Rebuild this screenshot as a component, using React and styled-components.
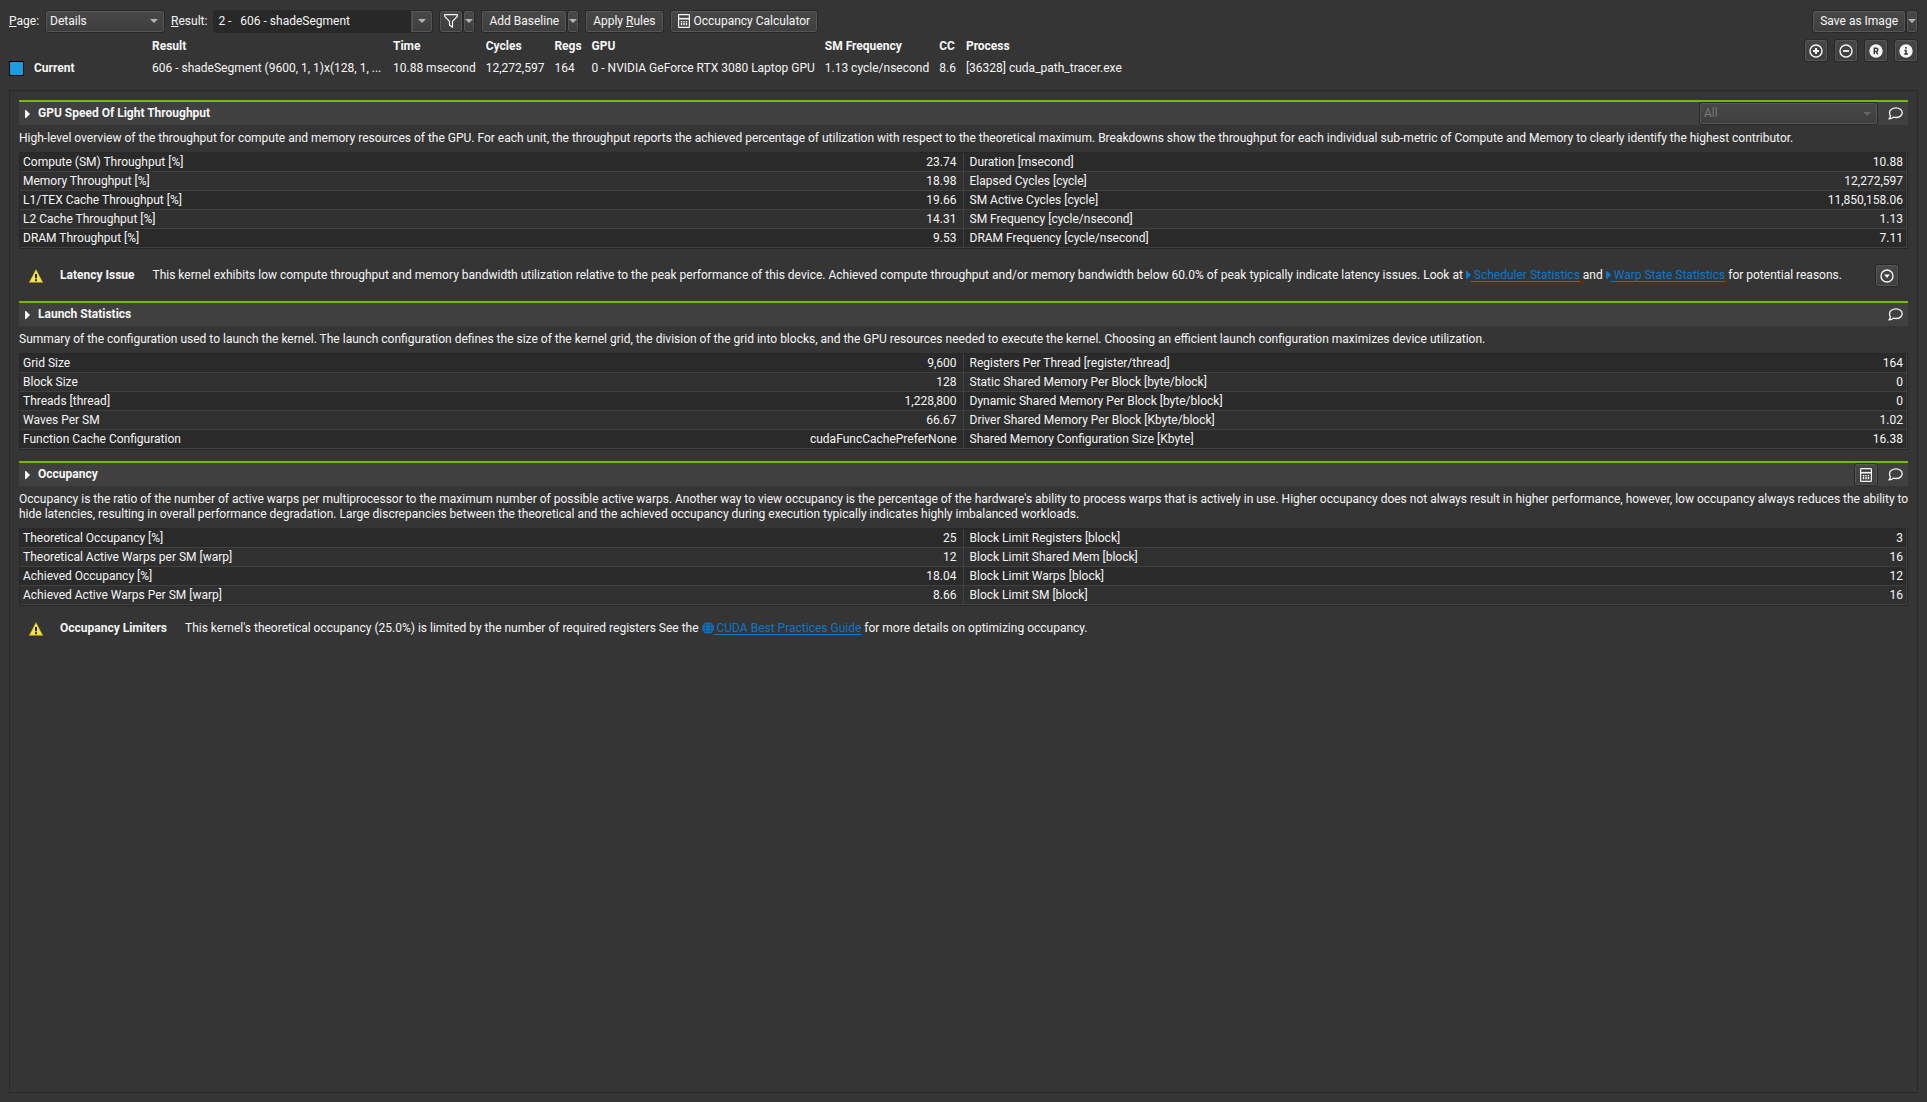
import React, { useId } from "react";
import styled, { createGlobalStyle, css } from "styled-components";

const GlobalStyle = createGlobalStyle`
  *, *::before, *::after { box-sizing: border-box; }
  body {
    margin: 0;
    background: #353535;
    color: #f5f5f5;
    font: 12px/15px Roboto, "Liberation Sans", sans-serif;
  }
  button, select { font: inherit; color: inherit; }
  svg { display: block; flex: none; }
`;

const Page = styled.div`
  display: flex;
  flex-direction: column;
  min-height: 100vh;
  padding: 9px;
`;

const Toolbar = styled.div`
  display: flex;
  align-items: center;
  gap: 6px;
  height: 24px;
`;

const ToolGroup = styled.div`
  display: flex;
  align-items: center;
`;

const Spacer = styled.div`
  flex: 1;
`;

const raised = css`
  border: 1px solid #282828;
  border-radius: 3px;
  background: linear-gradient(#484848, #3e3e3e);
  box-shadow: inset 0 0 0 1px #565656;
`;

const Button = styled.button`
  ${raised}
  display: inline-flex;
  align-items: center;
  justify-content: center;
  gap: 4px;
  height: 23px;
  padding: ${(p) => (p.$narrow || p.$icon ? "0" : "0 7px")};
  width: ${(p) => (p.$narrow ? "12px" : p.$icon ? "24px" : "auto")};
  color: ${(p) => (p.$narrow ? "#b4b4b4" : "inherit")};
  white-space: nowrap;
`;

const FlatButton = styled.button`
  display: inline-flex;
  align-items: center;
  justify-content: center;
  width: 22px;
  height: 22px;
  padding: 0;
  border: 0;
  background: none;
`;

const FieldLabel = styled.label`
  margin-right: 6px;
`;

const SelectBox = styled.div`
  display: inline-grid;
  width: ${(p) => p.$width}px;
  height: 23px;
  color: ${(p) => (p.$disabled ? "#777" : "inherit")};
  > * { grid-area: 1 / 1; }
`;

const Select = styled.select`
  ${raised}
  ${(p) => p.$sunken && css`background: #282828; box-shadow: none;`}
  appearance: none;
  width: 100%;
  padding: 0 20px 0 4px;
  opacity: 1;
  color: inherit;
`;

const SelectArrow = styled.span`
  display: flex;
  align-items: center;
  justify-content: center;
  justify-self: end;
  width: 22px;
  color: ${(p) => (p.$dim ? "#666" : "#b4b4b4")};
  pointer-events: none;
  ${(p) => p.$boxed && css`${raised} border-left-color: #484848; border-radius: 0 3px 3px 0;`}
`;

const Summary = styled.div`
  display: flex;
  justify-content: space-between;
  align-items: flex-start;
  height: 57px;
`;

const SummaryTable = styled.table`
  border-collapse: collapse;
  margin-top: 2px;
  th, td {
    height: 22px;
    padding: 0 10px 0 0;
    text-align: left;
    white-space: nowrap;
  }
`;

const ResultCell = styled.th`
  min-width: 241px;
`;

const CurrentLabel = styled.span`
  display: flex;
  align-items: center;
  gap: 10px;
  width: 133px;
`;

const Swatch = styled.span`
  width: 15px;
  height: 15px;
  border: 1px solid #000;
  background: #1c9ce0;
`;

const SummaryActions = styled.div`
  display: flex;
  gap: 6px;
  padding-top: 6px;
`;

const Panel = styled.main`
  flex: 1;
  display: flex;
  flex-direction: column;
  gap: 11px;
  padding: 9px;
  border: 1px solid #282828;
`;

const SectionHeader = styled.header`
  display: flex;
  align-items: center;
  gap: 6px;
  height: 25px;
  padding-right: 2px;
  border-top: 2px solid #76b900;
  background: #404040;
`;

const SectionTitle = styled.h2`
  flex: 1;
  margin: 0;
  font-size: 12px;
  font-weight: 700;
`;

const Toggle = styled.button`
  display: flex;
  align-items: center;
  gap: 8px;
  padding: 0 6px;
  border: 0;
  background: none;
`;

const Description = styled.p`
  margin: 0 -6px 0 0;
  padding: 6px 0;
`;

const Metrics = styled.table`
  width: 100%;
  table-layout: fixed;
  border: 1px solid #282828;
  border-spacing: 0;
  tr { background: #303030; }
  tr:nth-child(odd) { background: #2a2a2a; }
  th, td {
    height: 19px;
    padding: 0 6px;
    border-bottom: 1px solid #404040;
    font-weight: 400;
    white-space: nowrap;
  }
  th { text-align: left; }
  td {
    text-align: right;
    border-right: 1px solid #404040;
  }
  th:first-child { padding-left: 3px; }
  td:last-child { padding-right: 3px; }
`;

const Rule = styled.div`
  display: flex;
  align-items: center;
  padding: 15px 9px 3px 10px;
`;

const RuleName = styled.strong`
  margin: 0 18px 0 17px;
`;

const RuleText = styled.p`
  flex: 1;
  margin: 0;
`;

const Link = styled.a`
  color: #0a78cc;
  text-decoration: underline;
  text-underline-offset: 2px;
  svg { display: inline-block; vertical-align: ${(p) => (p.$globe ? "-2px" : "0")}; }
`;

const Caret = () => (
  <svg width="8" height="4" viewBox="0 0 8 4" fill="currentColor"><path d="M0 0h8L4 4z" /></svg>
);

const Disclosure = () => (
  <svg width="5" height="8" viewBox="0 0 5 8" fill="currentColor"><path d="M0 0h1l4 4-4 4H0z" /></svg>
);

const FilterIcon = () => (
  <svg width="14" height="14" viewBox="0 0 14 14" fill="none" stroke="currentColor" strokeWidth="1.2" strokeLinejoin="round">
    <path d="M.7.7h12.6v1.6L8.500 7.400v5.900L5.500 11V7.400L.7 2.300z" />
  </svg>
);

const CalculatorIcon = () => (
  <svg width="12" height="14" viewBox="0 0 12 14" fill="none" stroke="currentColor">
    <rect x=".6" y=".6" width="10.8" height="12.8" rx=".6" strokeWidth="1.2" />
    <path d="M1 4.700h10" strokeWidth="1.6" />
    <path d="M3.500 7v1.500m2.500-1.500v1.500m2.500-1.500v1.500M3.500 9v2.300m2.500-2.300v2.300m2.500-2.300v2.300" strokeWidth="1.4" />
  </svg>
);

const CircleIcon = ({ kind }) => (
  <svg width="14" height="14" viewBox="0 0 14 14" fill="none" stroke="currentColor">
    <circle cx="7" cy="7" r="6" strokeWidth="1.4" fill={kind === "reset" || kind === "info" ? "currentColor" : "none"} />
    {kind === "plus" && <path d="M7 4v6M4 7h6" strokeWidth="2" />}
    {kind === "minus" && <path d="M4 7h6" strokeWidth="1.8" />}
    {kind === "down" && <path d="M4 5.600h6L7 9z" fill="currentColor" stroke="none" />}
    {kind === "reset" && <path d="M5.300 10.300V4.200h2a1.500 1.500 0 0 1 0 3.200h-2M7.200 7.400l1.600 2.900" stroke="#353535" strokeWidth="1.4" />}
    {kind === "info" && <path d="M7 3v1.700M5.400 6.400H7v3.400M5.200 10.100h3.700" stroke="#353535" strokeWidth="1.5" />}
  </svg>
);

const CommentIcon = () => (
  <svg width="15" height="13" viewBox="0 0 15 13" fill="none" stroke="currentColor" strokeWidth="1.3" strokeLinejoin="round">
    <path d="M8 .8c3.500 0 6.200 2.200 6.200 4.900S11.500 10.500 8 10.500c-.9 0-1.800-.1-2.600-.4C4.400 11.300 2.900 11.900 1 11.900c.9-.9 1.400-1.900 1.500-3C1.700 8 1.500 6.900 1.500 5.700 1.500 3 4.500.8 8 .8z" />
  </svg>
);

const WarningIcon = () => (
  <svg width="14" height="14" viewBox="0 0 14 14">
    <path d="M7 .5L13.800 13.500H.2z" fill="#f5e43a" stroke="#b0a52a" strokeWidth=".5" strokeLinejoin="round" />
    <path d="M0 13.500h14" stroke="#8d8524" />
    <path d="M7 5v4.200m0 1v2" stroke="#222" strokeWidth="2" />
  </svg>
);

const GlobeIcon = () => (
  <svg width="12" height="12" viewBox="0 0 12 12">
    <circle cx="6" cy="6" r="6" fill="currentColor" />
    <path d="M0 6h12M1 3h10M1 9h10" stroke="#353535" strokeWidth=".6" />
    <ellipse cx="6" cy="6" rx="2.700" ry="6" fill="none" stroke="#353535" strokeWidth=".6" />
  </svg>
);

function Dropdown({ id, label, value, width, sunken, disabled }) {
  return (
    <SelectBox $width={width} $disabled={disabled}>
      <Select id={id} aria-label={label} defaultValue={value} disabled={disabled} $sunken={sunken}>
        <option>{value}</option>
      </Select>
      <SelectArrow $boxed={sunken} $dim={disabled}><Caret /></SelectArrow>
    </SelectBox>
  );
}

function LabeledDropdown({ mnemonic, rest, ...props }) {
  const id = useId();
  return (
    <ToolGroup>
      <FieldLabel htmlFor={id}><u>{mnemonic}</u>{rest}</FieldLabel>
      <Dropdown id={id} {...props} />
    </ToolGroup>
  );
}

function MetricsTable({ rows }) {
  return (
    <Metrics>
      <tbody>
        {rows.map(([a, b, c, d]) => (
          <tr key={a}>
            <th scope="row">{a}</th>
            <td>{b}</td>
            <th scope="row">{c}</th>
            <td>{d}</td>
          </tr>
        ))}
      </tbody>
    </Metrics>
  );
}

function MetricSection({ title, tools, description, rows, children }) {
  return (
    <section>
      <SectionHeader>
        <SectionTitle><Toggle aria-expanded="false"><Disclosure />{title}</Toggle></SectionTitle>
        {tools}
        <FlatButton aria-label="Add comment"><CommentIcon /></FlatButton>
      </SectionHeader>
      <Description>{description}</Description>
      <MetricsTable rows={rows} />
      {children}
    </section>
  );
}

const throughputRows = [
  ["Compute (SM) Throughput [%]", "23.74", "Duration [msecond]", "10.88"],
  ["Memory Throughput [%]", "18.98", "Elapsed Cycles [cycle]", "12,272,597"],
  ["L1/TEX Cache Throughput [%]", "19.66", "SM Active Cycles [cycle]", "11,850,158.06"],
  ["L2 Cache Throughput [%]", "14.31", "SM Frequency [cycle/nsecond]", "1.13"],
  ["DRAM Throughput [%]", "9.53", "DRAM Frequency [cycle/nsecond]", "7.11"],
];

const launchRows = [
  ["Grid Size", "9,600", "Registers Per Thread [register/thread]", "164"],
  ["Block Size", "128", "Static Shared Memory Per Block [byte/block]", "0"],
  ["Threads [thread]", "1,228,800", "Dynamic Shared Memory Per Block [byte/block]", "0"],
  ["Waves Per SM", "66.67", "Driver Shared Memory Per Block [Kbyte/block]", "1.02"],
  ["Function Cache Configuration", "cudaFuncCachePreferNone", "Shared Memory Configuration Size [Kbyte]", "16.38"],
];

const occupancyRows = [
  ["Theoretical Occupancy [%]", "25", "Block Limit Registers [block]", "3"],
  ["Theoretical Active Warps per SM [warp]", "12", "Block Limit Shared Mem [block]", "16"],
  ["Achieved Occupancy [%]", "18.04", "Block Limit Warps [block]", "12"],
  ["Achieved Active Warps Per SM [warp]", "8.66", "Block Limit SM [block]", "16"],
];

const summary = [
  ["Time", "10.88 msecond"],
  ["Cycles", "12,272,597"],
  ["Regs", "164"],
  ["GPU", "0 - NVIDIA GeForce RTX 3080 Laptop GPU"],
  ["SM Frequency", "1.13 cycle/nsecond"],
  ["CC", "8.6"],
  ["Process", "[36328] cuda_path_tracer.exe"],
];

export default function App() {
  return (
    <Page>
      <GlobalStyle />
      <Toolbar>
        <LabeledDropdown mnemonic="P" rest="age:" value="Details" width={120} />
        <LabeledDropdown mnemonic="R" rest="esult:" value={"2 -\u00a0\u00a0\u00a0606 - shadeSegment"} width={220} sunken />
        <ToolGroup>
          <Button $icon aria-label="Filter"><FilterIcon /></Button>
          <Button $narrow aria-label="Filter options"><Caret /></Button>
        </ToolGroup>
        <ToolGroup>
          <Button>Add Baseline</Button>
          <Button $narrow aria-label="Baseline options"><Caret /></Button>
        </ToolGroup>
        <Button><span>Apply <u>R</u>ules</span></Button>
        <Button><CalculatorIcon />Occupancy Calculator</Button>
        <Spacer />
        <ToolGroup>
          <Button>Save as Image</Button>
          <Button $narrow aria-label="Save options"><Caret /></Button>
        </ToolGroup>
      </Toolbar>

      <Summary>
        <SummaryTable>
          <thead>
            <tr>
              <td />
              <ResultCell scope="col">Result</ResultCell>
              {summary.map(([name]) => <th scope="col" key={name}>{name}</th>)}
            </tr>
          </thead>
          <tbody>
            <tr>
              <th scope="row"><CurrentLabel><Swatch />Current</CurrentLabel></th>
              <td>606 - shadeSegment (9600, 1, 1)x(128, 1, ...</td>
              {summary.map(([name, value]) => <td key={name}>{value}</td>)}
            </tr>
          </tbody>
        </SummaryTable>
        <SummaryActions>
          <Button $icon aria-label="Expand all"><CircleIcon kind="plus" /></Button>
          <Button $icon aria-label="Collapse all"><CircleIcon kind="minus" /></Button>
          <Button $icon aria-label="Reset"><CircleIcon kind="reset" /></Button>
          <Button $icon aria-label="Information"><CircleIcon kind="info" /></Button>
        </SummaryActions>
      </Summary>

      <Panel>
        <MetricSection
          title="GPU Speed Of Light Throughput"
          tools={<Dropdown label="Breakdown" value="All" width={179} disabled />}
          description="High-level overview of the throughput for compute and memory resources of the GPU. For each unit, the throughput reports the achieved percentage of utilization with respect to the theoretical maximum. Breakdowns show the throughput for each individual sub-metric of Compute and Memory to clearly identify the highest contributor."
          rows={throughputRows}
        >
          <Rule>
            <WarningIcon />
            <RuleName>Latency Issue</RuleName>
            <RuleText>
              This kernel exhibits low compute throughput and memory bandwidth utilization relative to the peak performance of this device. Achieved compute throughput and/or memory bandwidth below 60.0% of peak typically indicate latency issues. Look at{" "}
              <Link href="#scheduler"><Disclosure /> Scheduler Statistics</Link> and{" "}
              <Link href="#warp"><Disclosure /> Warp State Statistics</Link> for potential reasons.
            </RuleText>
            <Button $icon aria-label="Rule details"><CircleIcon kind="down" /></Button>
          </Rule>
        </MetricSection>

        <MetricSection
          title="Launch Statistics"
          description="Summary of the configuration used to launch the kernel. The launch configuration defines the size of the kernel grid, the division of the grid into blocks, and the GPU resources needed to execute the kernel. Choosing an efficient launch configuration maximizes device utilization."
          rows={launchRows}
        />

        <MetricSection
          title="Occupancy"
          tools={<Button $icon aria-label="Open occupancy calculator"><CalculatorIcon /></Button>}
          description="Occupancy is the ratio of the number of active warps per multiprocessor to the maximum number of possible active warps. Another way to view occupancy is the percentage of the hardware's ability to process warps that is actively in use. Higher occupancy does not always result in higher performance, however, low occupancy always reduces the ability to hide latencies, resulting in overall performance degradation. Large discrepancies between the theoretical and the achieved occupancy during execution typically indicates highly imbalanced workloads."
          rows={occupancyRows}
        >
          <Rule>
            <WarningIcon />
            <RuleName>Occupancy Limiters</RuleName>
            <RuleText>
              This kernel's theoretical occupancy (25.0%) is limited by the number of required registers See the{" "}
              <Link $globe href="#guide"><GlobeIcon /> CUDA Best Practices Guide</Link> for more details on optimizing occupancy.
            </RuleText>
          </Rule>
        </MetricSection>
      </Panel>
    </Page>
  );
}
